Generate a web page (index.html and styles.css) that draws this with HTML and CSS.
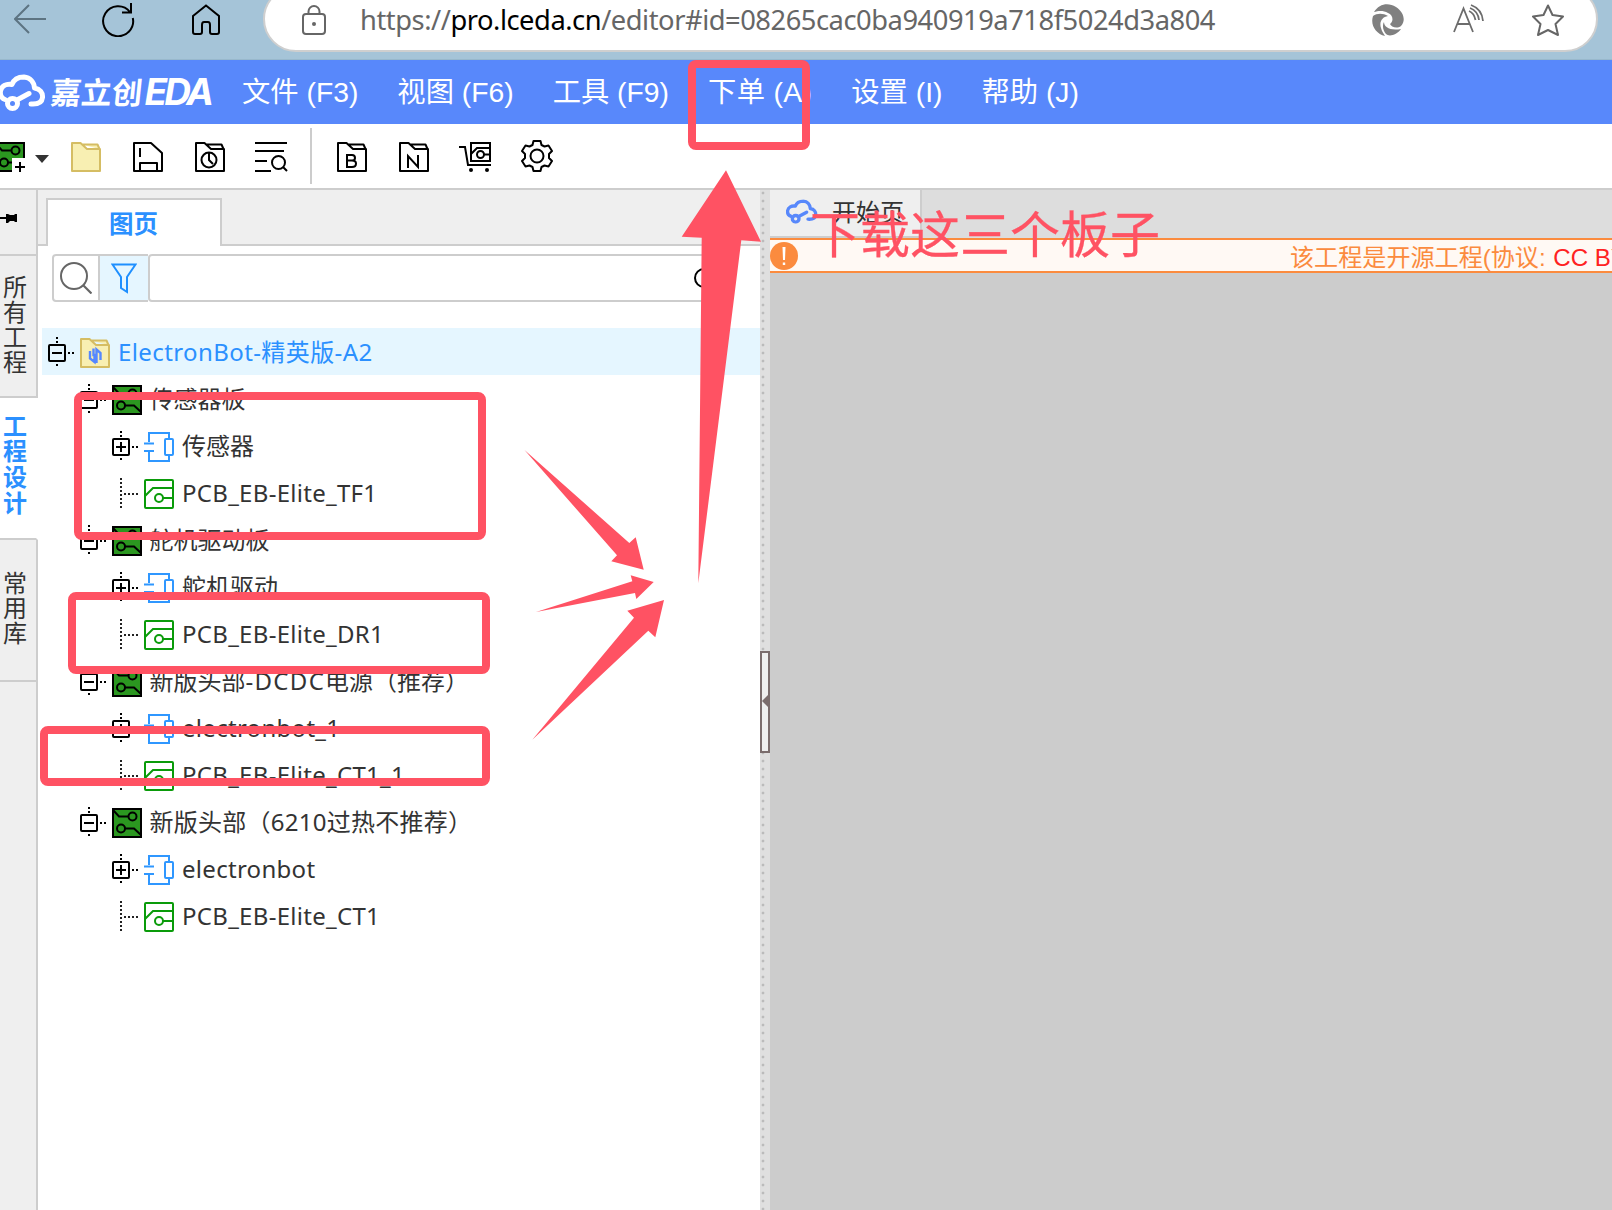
FILE: index.html
```html
<!DOCTYPE html>
<html lang="zh-CN">
<head>
<meta charset="utf-8">
<title>嘉立创EDA</title>
<link rel="stylesheet" href="styles.css">
</head>
<body>
<svg class="defs" width="0" height="0">
  <symbol id="board" viewBox="0 0 30 30"><path d="M1 1H29V29H1Z" fill="#2b9720" stroke="#000" stroke-width="2"/><g fill="none" stroke="#000" stroke-width="2"><path d="M1 2L7 8.500H16"/><circle cx="20.500" cy="8.500" r="4"/><circle cx="9" cy="20.500" r="4"/><path d="M13 20.500H22L29 27"/></g></symbol>
  <symbol id="sheet" viewBox="0 0 30 30"><g fill="none" stroke="#2f97ff" stroke-width="2"><path d="M5 10V1H25V6M5 20V29H25V24M0 11.500H10M0 19H10"/><rect x="21" y="7" width="8" height="16" rx="1"/></g></symbol>
  <symbol id="pcb" viewBox="0 0 30 30"><g fill="none" stroke="#0a9b0a" stroke-width="2"><rect x="1" y="1" width="28" height="28" rx="1"/><path d="M1 17L9 9H29M19 19H29"/><circle cx="15" cy="19" r="4"/></g></symbol>
  <symbol id="minus" viewBox="0 0 30 34"><g fill="none" stroke="#000" stroke-width="2"><rect x="1" y="9" width="16" height="16" rx="1"/><path d="M4 17H14"/><path d="M9 1V7M9 28V32" stroke-dasharray="2 2"/><path d="M20 17H27" stroke-dasharray="2 2"/></g></symbol>
  <symbol id="plus" viewBox="0 0 30 34"><g fill="none" stroke="#000" stroke-width="2"><rect x="1" y="9" width="16" height="16" rx="1"/><path d="M4 17H14M9 12V22"/><path d="M9 1V7M9 28V32" stroke-dasharray="2 2"/><path d="M20 17H27" stroke-dasharray="2 2"/></g></symbol>
  <symbol id="leaf" viewBox="0 0 30 34"><path d="M9 1V31M12 17H27" fill="none" stroke="#222" stroke-width="2" stroke-dasharray="2 2"/></symbol>
  <symbol id="cloud" viewBox="0 0 48 37"><g fill="none" stroke="currentColor" stroke-width="5" stroke-linecap="round" stroke-linejoin="round"><path d="M7 25.500C3 24 2 20 2.500 17C3.500 12 8 9.500 14 10.500C16 5 21 3 26 3C32 3.500 36 8 36.500 14C42 15 45 19 44.500 23.500C44 28 40 30.500 33 30"/><circle cx="14.500" cy="29.500" r="5"/><path d="M19 26L31 19.500"/></g></symbol>
  <symbol id="folder" viewBox="0 0 30 30"><path d="M1 1H9.500L16 7H29V29H1ZM11 2.500H26.500L28.500 7" stroke-width="2" stroke-linejoin="round"/></symbol>
</svg>

<header class="browser">
  <svg class="i-back" width="32" height="30" viewBox="0 0 32 30"><path d="M32 15H1M15 1L1 15L15 29" fill="none" stroke="#5d7482" stroke-width="2"/></svg>
  <svg class="i-reload" width="33" height="34" viewBox="0 0 33 34"><path d="M30.800 15A15 15 0 1 1 28 9M20 9.500H29V0" fill="none" stroke="#000" stroke-width="2"/></svg>
  <svg class="i-home" width="28" height="31" viewBox="0 0 28 31"><path d="M1 12L14 1.500L27 12V28Q27 30 25 30H20Q18 30 18 28V21Q18 18 16 18H12Q10 18 10 21V28Q10 30 8 30H3Q1 30 1 28Z" fill="none" stroke="#000" stroke-width="2"/></svg>
  <div class="address">
    <svg class="i-lock" width="24" height="30" viewBox="0 0 24 30"><g fill="none" stroke="#666" stroke-width="2"><rect x="1" y="9" width="22" height="20" rx="3"/><path d="M6.500 9V6.500A5.500 5.500 0 0 1 17.500 6.500V9"/></g><circle cx="12" cy="19" r="2" fill="#666"/></svg>
    <span class="url">https://<b>pro.lceda.cn</b>/editor#id=08265cac0ba940919a718f5024d3a804</span>
    <svg class="i-swirl" width="32" height="32" viewBox="0 0 32 32"><path d="M2 8C7 0 16-2 24 3C32 8 34 17 29 22C25 25 19 23 18 20C22 17 21 11 16 9C11 6 6 7 2 8Z" fill="#808080"/><path d="M1 12C5 9 11 9 16 12C10 13 7 18 9 24C10 28 12 30 13 32C4 30-2 21 1 12Z" fill="#808080"/><path d="M12 18C12 23 18 27 29 25C25 31 17 33 14 30C11 27 10 21 12 18Z" fill="#808080"/></svg>
    <svg class="i-read" width="31" height="29" viewBox="0 0 31 29"><path d="M1 28L10.500 4.500L20 28M4 20H17M16 7Q21 9 22.500 16M18 1Q29 5 30 17M17 4Q25 7 26 16" fill="none" stroke="#6c6c6c" stroke-width="1.800"/></svg>
    <svg class="i-star" width="32" height="32" viewBox="0 0 32 32"><path d="M16 1.500L20.500 11L31 12.500L23.500 20L26 31L16 26L6 31L8.500 20L1 12.500L11.500 11Z" fill="none" stroke="#666" stroke-width="2" stroke-linejoin="round"/></svg>
  </div>
</header>

<nav class="menubar">
  <div class="brand"><svg class="logo" width="48" height="37"><use href="#cloud"/></svg><span class="brand-cn">嘉立创</span><span class="brand-en">EDA</span></div>
  <span>文件 (F3)</span><span>视图 (F6)</span><span>工具 (F9)</span><span class="order">下单 (A)</span><span>设置 (I)</span><span>帮助 (J)</span>
</nav>

<div class="toolbar">
  <div class="new"><svg width="30" height="30"><use href="#board"/></svg><svg class="new-plus" width="14" height="15" viewBox="0 0 14 15"><path d="M0 0H14V15H0Z" fill="#fff"/><path d="M3 9H13M8 4V14" stroke="#000" stroke-width="2"/></svg></div>
  <svg class="caret" width="14" height="8" viewBox="0 0 14 8"><path d="M0 0H14L7 8Z" fill="#333"/></svg>
  <svg class="tool" width="30" height="30" fill="#f8efb2" stroke="#d5bd63"><use href="#folder"/></svg>
  <svg class="tool" width="30" height="30" viewBox="0 0 30 30"><path d="M1 1H18L29 11V29H1ZM7 6V15M7 29V21H24V29" fill="none" stroke="#000" stroke-width="2" stroke-linejoin="round"/></svg>
  <svg class="tool" width="30" height="30" viewBox="0 0 30 30" fill="none" stroke="#000"><use href="#folder"/><circle cx="14" cy="18" r="7.500" stroke-width="2"/><path d="M14 11V18L18 22" stroke-width="2"/></svg>
  <svg class="tool-find" width="33" height="30" viewBox="0 0 33 30"><path d="M0 1H32M0 9H29M0 19H12M0 29H16M28 25L32 29" stroke="#000" stroke-width="2"/><circle cx="23.500" cy="20.500" r="6.500" fill="none" stroke="#000" stroke-width="2"/></svg>
  <i class="divider"></i>
  <svg class="tool first" width="30" height="30" viewBox="0 0 30 30" fill="none" stroke="#000"><use href="#folder"/><path d="M10 13V25H15Q19 25 19 21.500Q19 18.500 15 18.500H10M15 18.500Q18 18.500 18 16Q18 13 15 13H9" stroke-width="2"/></svg>
  <svg class="tool" width="30" height="30" viewBox="0 0 30 30" fill="none" stroke="#000"><use href="#folder"/><path d="M9 26V14L19 25V13" stroke-width="2"/></svg>
  <svg class="tool-cart" width="32" height="31" viewBox="0 0 32 31"><g fill="none" stroke="#000" stroke-width="2"><path d="M0 5H6L9 23H32M12 1H31V19H12ZM12 12L18 6H31M25 12.500H31"/><circle cx="21.500" cy="12.500" r="3.500"/></g><circle cx="12" cy="28" r="2"/><circle cx="28" cy="28" r="2"/></svg>
  <svg class="tool-gear" width="32" height="32" viewBox="0 0 32 32"><g fill="none" stroke="#000" stroke-width="2" stroke-linejoin="round"><path d="M12.500 1H19.500L20.500 5L23.500 6.500L27.500 5.500L31 11L28 14V18L31 21L27.500 26.500L23.500 25.500L20.500 27L19.500 31H12.500L11.500 27L8.500 25.500L4.500 26.500L1 21L4 18V14L1 11L4.500 5.500L8.500 6.500L11.500 5Z"/><circle cx="16" cy="16" r="6.500"/></g></svg>
</div>

<main class="workspace">
  <aside class="rail">
    <div class="pin"><svg width="17" height="10" viewBox="0 0 17 10"><path d="M0 4H6V1H8L10 2H14L15 1H17V9H15L14 8H10L8 10H6V6H0Z"/></svg></div>
    <div class="rail-tab">所有工程</div>
    <div class="rail-tab active">工程设计</div>
    <div class="rail-tab">常用库</div>
    <div class="rail-rest"></div>
  </aside>
  <section class="panel">
    <div class="tabs"><div class="tab-gap"></div><div class="tab">图页</div><div class="tab-rest"></div></div>
    <div class="search">
      <div class="s-btn"><svg width="32" height="32" viewBox="0 0 32 32"><circle cx="14" cy="14" r="13" fill="none" stroke="#666" stroke-width="2"/><path d="M23.500 23.500L31.500 31.500" stroke="#666" stroke-width="2.200"/></svg></div>
      <div class="s-btn filter"><svg width="26" height="31" viewBox="0 0 26 31"><path d="M1.500 1.500H24.500L16 14V29L10 25V14Z" fill="none" stroke="#1e8fff" stroke-width="2"/></svg></div>
      <div class="s-input"><svg width="20" height="20" viewBox="0 0 20 20"><circle cx="10" cy="10" r="9" fill="none" stroke="#000" stroke-width="2"/></svg></div>
    </div>
    <div class="tree">
      <div class="row root"><svg class="ex"><use href="#minus"/></svg><svg class="ic" viewBox="0 0 30 30"><use href="#folder" fill="#f8efb2" stroke="#d5bd63"/><path d="M13.500 10.500V17H16M10 13V20.500L14.500 24V18M16.500 25V18H14M20.500 22V15L16.500 11.500V17" fill="none" stroke="#5588ff" stroke-width="2.400"/></svg><span class="root-name">ElectronBot-精英版-A2</span></div>
      <div class="row l1"><svg class="ex"><use href="#minus"/></svg><svg class="ic"><use href="#board"/></svg><span>传感器板</span></div>
      <div class="row l2"><svg class="ex"><use href="#plus"/></svg><svg class="ic"><use href="#sheet"/></svg><span>传感器</span></div>
      <div class="row l2"><svg class="ex"><use href="#leaf"/></svg><svg class="ic"><use href="#pcb"/></svg><span class="latin">PCB_EB-Elite_TF1</span></div>
      <div class="row l1"><svg class="ex"><use href="#minus"/></svg><svg class="ic"><use href="#board"/></svg><span>舵机驱动板</span></div>
      <div class="row l2"><svg class="ex"><use href="#plus"/></svg><svg class="ic"><use href="#sheet"/></svg><span>舵机驱动</span></div>
      <div class="row l2"><svg class="ex"><use href="#leaf"/></svg><svg class="ic"><use href="#pcb"/></svg><span class="latin">PCB_EB-Elite_DR1</span></div>
      <div class="row l1"><svg class="ex"><use href="#minus"/></svg><svg class="ic"><use href="#board"/></svg><span class="dcdc">新版头部<i>-DCDC</i>电源（推荐）</span></div>
      <div class="row l2"><svg class="ex"><use href="#plus"/></svg><svg class="ic"><use href="#sheet"/></svg><span class="latin">electronbot_1</span></div>
      <div class="row l2"><svg class="ex"><use href="#leaf"/></svg><svg class="ic"><use href="#pcb"/></svg><span class="latin">PCB_EB-Elite_CT1_1</span></div>
      <div class="row l1"><svg class="ex"><use href="#minus"/></svg><svg class="ic"><use href="#board"/></svg><span class="hot">新版头部（6210过热不推荐）</span></div>
      <div class="row l2"><svg class="ex"><use href="#plus"/></svg><svg class="ic"><use href="#sheet"/></svg><span class="latin">electronbot</span></div>
      <div class="row l2"><svg class="ex"><use href="#leaf"/></svg><svg class="ic"><use href="#pcb"/></svg><span class="latin">PCB_EB-Elite_CT1</span></div>
    </div>
  </section>
  <div class="splitter"><div class="handle"><svg width="6" height="12" viewBox="0 0 6 12"><path d="M6 0V12L0 6Z" fill="#7b6d6d"/></svg></div></div>
  <section class="editor">
    <div class="doc-tabs"><div class="doc-tab"><svg class="doc-icon" width="32" height="25" viewBox="0 0 48 37"><use href="#cloud"/></svg><span>开始页</span></div></div>
    <div class="notice"><svg width="28" height="28" viewBox="0 0 28 28"><circle cx="14" cy="14" r="14" fill="#fb8b3e"/><path d="M12.500 5H15.500L15 18H13ZM12.800 20.500H15.200V23H12.800Z" fill="#fff"/></svg><span class="notice-text">该工程是开源工程(协议: <em>CC BY-NC</em></span></div>
  </section>
</main>

<div class="mark mark-order"></div>
<div class="mark mark-sensor"></div>
<div class="mark mark-driver"></div>
<div class="mark mark-head"></div>
<svg class="arrows" width="1612" height="1210" viewBox="0 0 1612 1210" fill="#ff5263">
  <path d="M524.500 450L629.300 543L635.700 537.300L643.700 569.700L611.300 561.300L617 555.300Z"/>
  <path d="M536 612L632.300 581.300L630.700 575.300L653.700 582L636.300 599L635 593Z"/>
  <path d="M532.300 739.700L634 617.700L627.300 610.700L664 600L655.300 637.300L648.300 630.700Z"/>
  <path d="M698.300 583.300L701.700 237.700L681.700 236.700L726 170.300L761 241.700L741.300 240.300Z"/>
</svg>
<div class="callout">下载这三个板子</div>
</body>
</html>
```

FILE: styles.css
```css
* { box-sizing: border-box; }
body { margin: 0; width: 1612px; height: 1210px; overflow: hidden; position: relative; display: flex; flex-direction: column; background: #fff; font-family: "Liberation Sans", "Noto Sans CJK SC", sans-serif; }
svg { display: block; flex: none; }
.defs { position: absolute; }

.browser { height: 60px; flex: none; display: flex; align-items: flex-start; background: #a5c4d8; border-bottom: 1px solid #98b8cc; }
.i-back { margin: 4px 0 0 14px; }
.i-reload { margin: 3px 0 0 56px; }
.i-home { margin: 4px 0 0 57px; }
.address { width: 1335px; height: 66px; margin: -14px 0 0 43px; padding: 14px 0 0; display: flex; align-items: flex-start; background: #fff; border: 2px solid #cfcfcf; border-radius: 33px; }
.i-lock { margin: 3px 0 0 37px; }
.url { width: 1011px; margin: -1px 0 0 34px; white-space: nowrap; font: 27.3px/38px "Noto Sans", sans-serif; letter-spacing: -.46px; color: #666; }
.url b { font-weight: 400; color: #000; }
.i-swirl { margin: 2px 0 0 1px; }
.i-read { margin: 2px 0 0 49px; }
.i-star { margin: 2px 0 0 48px; }

.menubar { height: 64px; flex: none; display: flex; align-items: center; gap: 39px; background: #5888fb; color: #fff; font-size: 28.3px; white-space: nowrap; }
.menubar > span { margin-top: -6px; }
.menubar > .order { letter-spacing: .35px; }
.brand { width: 203px; display: flex; align-items: center; }
.logo { margin: 0 0 0 -2px; }
.brand-cn { margin: -3px 0 0 5px; font: 700 30.500px/40px "Noto Sans CJK SC", sans-serif; transform: skewX(-6deg); }
.brand-en { margin: 0 0 0 2px; font: italic 700 37px/40px Inter, sans-serif; letter-spacing: -3px; }

.toolbar { height: 66px; flex: none; display: flex; align-items: flex-start; border-bottom: 2px solid #cdcdcd; padding-top: 4px; }
.new { width: 25px; height: 30px; margin-top: 14px; display: flex; justify-content: flex-end; position: relative; }
.new-plus { position: absolute; right: -1px; bottom: -1px; }
.caret { margin: 27px 0 0 10px; }
.tool { margin: 14px 0 0 32px; }
.caret + .tool { margin-left: 22px; }
.tool-find { margin: 14px 0 0 30px; }
.divider { width: 2px; height: 56px; margin-left: 22px; background: #ccc; }
.tool.first { margin-left: 25px; }
.tool-cart { margin: 14px 0 0 30px; }
.tool-gear { margin: 12px 0 0 30px; }

.workspace { flex: 1; display: flex; min-height: 0; }
.rail { width: 38px; display: flex; flex-direction: column; }
.pin, .rail-tab, .rail-rest { background: #efefef; border-right: 2px solid #cdcdcd; }
.pin { height: 66px; padding-top: 23px; border-bottom: 2px solid #cdcdcd; }
.rail-tab { height: 142px; display: flex; align-items: center; padding: 0 8px 3px 3px; border-bottom: 2px solid #cdcdcd; font-size: 24px; line-height: 25px; color: #333; word-break: break-all; }
.rail-tab.active { background: #fff; border-right-color: #fff; padding-bottom: 6px; line-height: 25.600px; color: #2b90ff; font-weight: 700; }
.rail-rest { flex: 1; }

.panel { width: 722px; background: #fff; }
.tabs { height: 56px; display: flex; background: #efefef; }
.tab-gap { width: 8px; border-bottom: 2px solid #cdcdcd; }
.tab { width: 176px; height: 48px; margin-top: 8px; padding-right: 1px; background: #fff; border: 2px solid #cdcdcd; border-bottom: 0; text-align: center; font-weight: 700; font-size: 24.500px; line-height: 49px; color: #2b90ff; }
.tab-rest { flex: 1; border-bottom: 2px solid #cdcdcd; }
.search { display: flex; height: 48px; margin: 8px 0 26px 14px; }
.s-btn { width: 48px; border: 2px solid #cdcdcd; border-radius: 4px 0 0 4px; padding: 6px 0 0 6px; }
.s-btn.filter { width: 48px; border-left: 0; border-right: 0; border-radius: 0; background: #e5f6ff; padding: 7px 0 0 11px; }
.s-input { width: 574px; border: 2px solid #cdcdcd; border-radius: 4px; display: flex; align-items: center; padding-left: 544px; }
.tree { margin-left: 4px; }
.row { height: 47px; display: flex; align-items: flex-start; padding-left: 6px; font: 24px/47px "Noto Sans", "Noto Sans CJK SC", sans-serif; color: #333; white-space: nowrap; }
.row.root { background: #e5f6ff; color: #2b90ff; }
.root-name { letter-spacing: .4px; }
.latin { letter-spacing: .29px; }
.dcdc i { font-style: normal; letter-spacing: 1.300px; }
.hot { letter-spacing: .25px; }
.l1 { padding-left: 38px; }
.l2 { padding-left: 70px; }
.ex { width: 30px; height: 34px; margin: 8px 2px 0 0; }
.ic { width: 30px; height: 30px; margin: 10px 8px 0 0; }
.l1 .ic { margin-right: 7.500px; }

.splitter { width: 10px; background: radial-gradient(circle at 3px 3px, #bbb 1.2px, transparent 1.7px) 0 0 / 10px 8px #dfdfdf; }
.handle { height: 102px; margin-top: 461px; background: #efefef; border: 2px solid #7b6d6d; display: flex; align-items: center; padding-bottom: 2px; }
.editor { flex: 1; min-width: 0; background: #ccc; }
.doc-tabs { height: 48px; background: #ddd; }
.doc-tab { width: 152px; height: 48px; display: flex; align-items: flex-start; background: #efefef; border: solid #cdcdcd; border-width: 0 2px 2px 0; padding-left: 16px; font-size: 24px; line-height: 46px; color: #333; }
.doc-icon { margin: 9px 14px 0 0; color: #5888fb; }
.notice { height: 35px; display: flex; background: #fff9f4; border: solid #fb8b3e; border-width: 2px 0; overflow: hidden; }
.notice svg { margin-top: 2px; }
.notice-text { margin-left: 492px; font-size: 24.100px; line-height: 35px; white-space: nowrap; color: #fb8b3e; }
.notice-text em { font-style: normal; margin-left: 1px; color: #f22; }

.mark { position: absolute; border: 8px solid #ff5263; border-radius: 8px; }
.mark-order { left: 688px; top: 60px; width: 122px; height: 90px; }
.mark-sensor { left: 74px; top: 392px; width: 412px; height: 148px; }
.mark-driver { left: 68px; top: 592px; width: 422px; height: 82px; }
.mark-head { left: 40px; top: 726px; width: 450px; height: 60px; }
.arrows { position: absolute; left: 0; top: 0; }
.callout { position: absolute; left: 810px; top: 201px; font: 400 50px/60px "Noto Sans CJK SC", sans-serif; -webkit-text-stroke: .3px #ff5263; color: #ff5263; white-space: nowrap; }
```
